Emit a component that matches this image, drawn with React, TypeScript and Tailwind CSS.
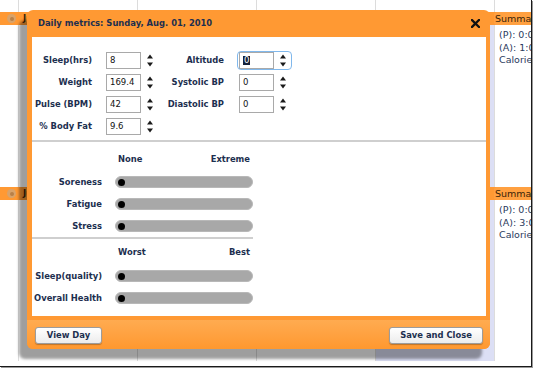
import type { ReactNode } from "react";

const cols = "grid grid-cols-[18px_119px_119px_119px_119px_1fr]";

const Spinner = () => (
  <svg width="6" height="13" viewBox="0 0 6 13" className="shrink-0">
    <polygon points="0,4.5 3,0.5 6,4.5" fill="#1a1a1a" />
    <polygon points="0,8.5 6,8.5 3,12.5" fill="#1a1a1a" />
  </svg>
);

const NumInput = ({ value, selected }: { value: string; selected?: boolean }) => (
  <div className="w-[35px] h-[17px] border border-[#a9a9a9] bg-white flex items-center pl-[3px] text-[8.5px] text-[#111] font-normal">
    {selected ? <span className="bg-[#14213a] text-white px-[1px] leading-[9px]">{value}</span> : value}
  </div>
);

const MetricRow = ({
  l1,
  v1,
  l2,
  v2,
  focused,
}: {
  l1: string;
  v1: string;
  l2?: string;
  v2?: string;
  focused?: boolean;
}) => (
  <div className="flex items-center h-[17px]">
    <span className="w-[60px] text-right whitespace-nowrap">{l1}</span>
    <div className="ml-[14px]">
      <NumInput value={v1} />
    </div>
    <div className="ml-[6px]">
      <Spinner />
    </div>
    {l2 && (
      <>
        <span className="w-[60px] ml-[11px] text-right whitespace-nowrap">{l2}</span>
        <div
          className={`ml-[14px] flex items-center pl-[1px] pr-[5px] rounded-[3px] ${focused ? "outline-[1.5px] outline-solid outline-[#80b8ec]" : ""}`}
        >
          <NumInput value={v2 ?? ""} selected={focused} />
          <div className="ml-[6px]">
            <Spinner />
          </div>
        </div>
      </>
    )}
  </div>
);

const SliderRow = ({ label }: { label: string }) => (
  <div className="flex items-center h-[12px]">
    <span className="w-[70px] text-right whitespace-nowrap">{label}</span>
    <div className="ml-[13px] w-[138px] h-[12px] rounded-full bg-[#a8a8a8] border border-[#b8b8b8] flex items-center pl-[2px]">
      <div className="w-[7px] h-[7px] rounded-full bg-black" />
    </div>
  </div>
);

const Scale = ({ lo, hi }: { lo: string; hi: string }) => (
  <div className="ml-[86px] w-[132px] flex justify-between h-[12px] items-center">
    <span>{lo}</span>
    <span>{hi}</span>
  </div>
);

const Btn = ({ children, w }: { children: ReactNode; w: string }) => (
  <button
    className={`${w} h-[17px] rounded-[3px] border border-[#9c9c9c] bg-gradient-to-b from-white to-[#ececec] text-[8.4px] font-bold text-[#1d2f4f] leading-none shadow-[0_1px_1px_rgba(0,0,0,0.25)]`}
  >
    {children}
  </button>
);

const SummaryText = ({ a }: { a: string }) => (
  <div className="pl-[4px] pt-[4px] text-[9.5px] leading-[12.5px] text-[#2a3a5c] whitespace-nowrap overflow-hidden">
    <div>(P): 0:00</div>
    <div>(A): {a}:00</div>
    <div>Calories</div>
  </div>
);

const BarRow = ({ left }: { left: string }) => (
  <div className={`${cols} h-[13px] bg-[#ff9933]`}>
    <div className="flex items-center pl-[7px]">
      <div className="w-[9px] h-[9px] rounded-full bg-[#d9a36a] flex items-center justify-center">
        <div className="w-[4px] h-[4px] rounded-full bg-[#b88048]" />
      </div>
    </div>
    <div className="pl-[5px] text-[8.5px] font-bold text-[#3a2408] leading-[13px] whitespace-nowrap">{left}</div>
    <div />
    <div />
    <div />
    <div className="pl-[1px] text-[9.5px] text-[#3a2408] leading-[13px] whitespace-nowrap overflow-hidden rounded-l-[3px] bg-[#ffa040]">
      Summary
    </div>
  </div>
);

const CellRow = ({ h, a }: { h: string; a: string }) => (
  <div className={`${cols} ${h}`}>
    <div />
    <div className="border-l border-[#dcdcdc]" />
    <div className="border-l border-[#dcdcdc]" />
    <div className="border-l border-[#dcdcdc]" />
    <div className="border-l border-[#dcdcdc] bg-[#dcdff5]" />
    <div className="border-l border-[#dcdcdc] min-w-0">
      <SummaryText a={a} />
    </div>
  </div>
);

export default function App() {
  return (
    <div className="w-[534px] h-[369px] bg-white relative overflow-hidden font-['DejaVu_Sans',sans-serif]">
      {/* calendar behind */}
      <div className="w-[532px] h-[367px] border-r border-b border-[#1a1a1a] shadow-[1px_1px_0_#9a9a9a] flex flex-col overflow-hidden">
        <div className={`${cols} h-[12px]`}>
          <div />
          <div className="border-l border-[#dcdcdc]" />
          <div className="border-l border-[#dcdcdc]" />
          <div className="border-l border-[#dcdcdc]" />
          <div className="border-l border-[#dcdcdc]" />
          <div className="border-l border-[#dcdcdc]" />
        </div>
        <BarRow left="Jul 25" />
        <CellRow h="h-[162px]" a="1" />
        <BarRow left="Jul 31" />
        <CellRow h="h-[161px]" a="3" />
      </div>

      {/* modal */}
      <div className="absolute left-[27px] top-[10px] w-[463px] h-[339px] rounded-[6px] bg-[#ff9933] shadow-[-8px_10px_3px_rgba(0,0,0,0.38)] flex flex-col text-[8.4px] font-bold text-[#1d2f4f] leading-none">
        <div className="h-[27px] flex items-center justify-between pl-[11px] pr-[10px]">
          <span className="text-[8.4px] font-bold text-[#1d2f4f]">Daily metrics: Sunday, Aug. 01, 2010</span>
          <svg width="9" height="9" viewBox="0 0 9 9">
            <path d="M1 1 L8 8 M8 1 L1 8" stroke="#111" strokeWidth="2.3" strokeLinecap="square" />
          </svg>
        </div>

        <div className="h-[279px] ml-[5px] mr-[4px] bg-white flex flex-col">
          <div className="pt-[15px] flex flex-col gap-[5px]">
            <MetricRow l1="Sleep(hrs)" v1="8" l2="Altitude" v2="0" focused />
            <MetricRow l1="Weight" v1="169.4" l2="Systolic BP" v2="0" />
            <MetricRow l1="Pulse (BPM)" v1="42" l2="Diastolic BP" v2="0" />
            <MetricRow l1="% Body Fat" v1="9.6" />
          </div>

          <div className="mt-[5px] h-[2px] bg-[#cfcfcf]" />

          <div className="pt-[11px]">
            <Scale lo="None" hi="Extreme" />
          </div>
          <div className="mt-[11px] flex flex-col gap-[10px]">
            <SliderRow label="Soreness" />
            <SliderRow label="Fatigue" />
            <SliderRow label="Stress" />
          </div>

          <div className="mt-[5px] w-[221px] h-[2px] bg-[#cfcfcf]" />

          <div className="pt-[7px]">
            <Scale lo="Worst" hi="Best" />
          </div>
          <div className="mt-[12px] flex flex-col gap-[10px]">
            <SliderRow label="Sleep(quality)" />
            <SliderRow label="Overall Health" />
          </div>
        </div>

        <div className="flex-1 mt-[4px] rounded-b-[6px] bg-gradient-to-b from-[#ffab50] to-[#ff982e] flex items-start justify-between pl-[8px] pr-[7px] pt-[7px]">
          <Btn w="w-[67px]">View Day</Btn>
          <Btn w="w-[94px]">Save and Close</Btn>
        </div>
      </div>
    </div>
  );
}
